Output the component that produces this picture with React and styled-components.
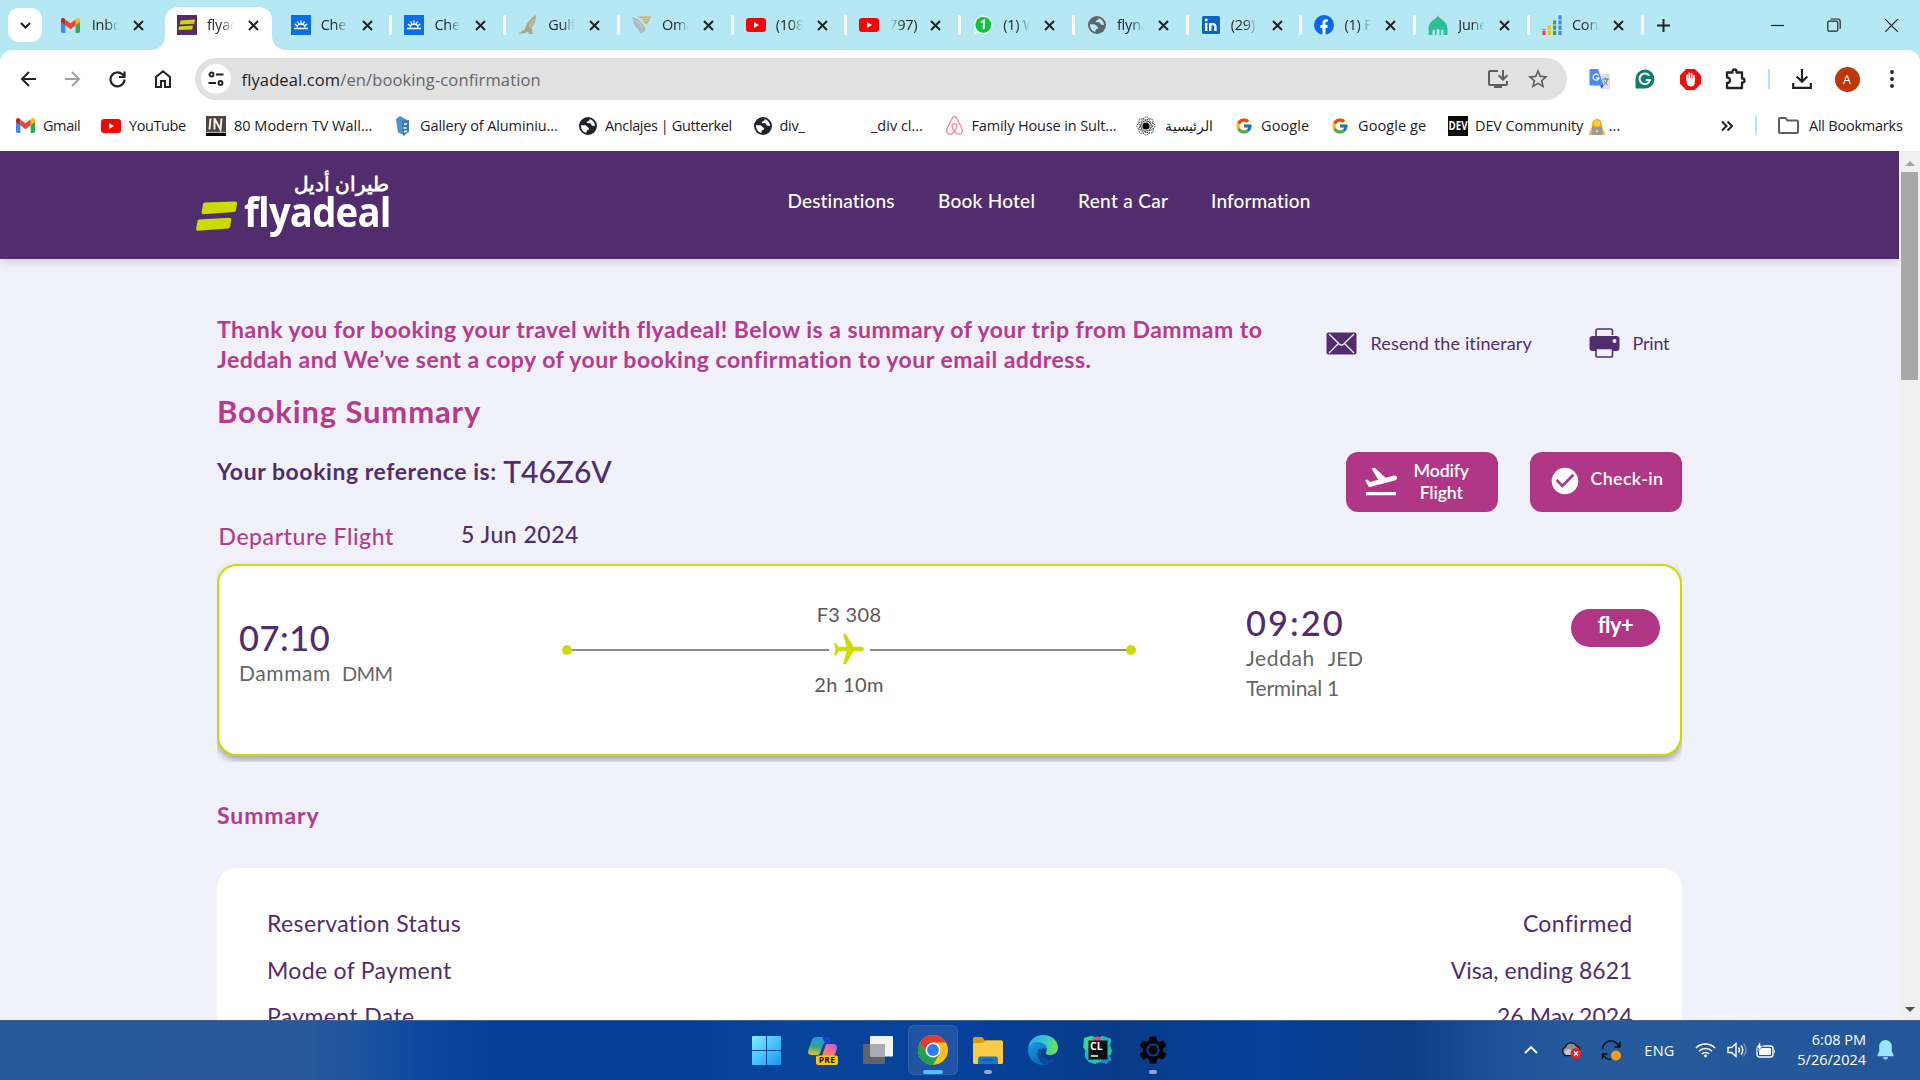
import React from "react";
import styled, { createGlobalStyle, css } from "styled-components";
import { FcGoogle } from "react-icons/fc";
import { FaAirbnb } from "react-icons/fa";
import {
  MdAirplanemodeActive,
  MdCheckCircle,
  MdFlightTakeoff,
  MdInstallDesktop,
  MdStarBorder,
  MdSettings,
} from "react-icons/md";

const ui = `"Open Sans", "Noto Sans", sans-serif`;
const brand = `Lato, "Noto Sans", sans-serif`;
const purple = "#522d6d";
const pink = "#b03786";
const lime = "#cddc00";

const GlobalStyle = createGlobalStyle`
  *, *::before, *::after { box-sizing: border-box; }
  body { margin: 0; background: #fff; overflow: hidden; }
  svg { display: block; flex: none; }
`;

const Screen = styled.div`
  width: 1920px;
  height: 1080px;
  display: flex;
  flex-direction: column;
  overflow: hidden;
  font-family: ${ui};
`;

/* ---------- browser tabs ---------- */

const TabStrip = styled.div`
  height: 50px;
  display: flex;
  flex: none;
  background: #b5e8f2;
`;

const TabSearch = styled.div`
  width: 34px;
  height: 34px;
  margin: 8px 7.7px 0 8px;
  border-radius: 11px;
  background: #fff;
  display: flex;
  align-items: center;
  justify-content: center;
`;

const activeShape = css`
  &::before {
    content: "";
    position: absolute;
    z-index: 0;
    left: 2px;
    right: 5px;
    top: 7px;
    bottom: 0;
    border-radius: 13px 13px 0 0;
    background: #fff;
  }
  &::after {
    content: "";
    position: absolute;
    z-index: 0;
    left: -11px;
    right: -8px;
    bottom: 0;
    height: 13px;
    background: radial-gradient(circle at 0 0, transparent 12.5px, #fff 13px) left / 13px 13px no-repeat,
      radial-gradient(circle at 100% 0, transparent 12.5px, #fff 13px) right / 13px 13px no-repeat;
  }
`;

const TabBox = styled.div`
  position: relative;
  width: 113.75px;
  flex: none;
  padding-left: ${(p) => (p.$first ? 11 : 13.5)}px;
  display: flex;
  align-items: center;
  ${(p) => p.$active && activeShape}
  > * { z-index: 1; }
`;

const TabTitle = styled.span`
  width: 28px;
  margin-left: ${(p) => (p.$first ? 11 : 10)}px;
  margin-right: 13px;
  overflow: hidden;
  white-space: nowrap;
  display: flex;
  justify-content: ${(p) => (p.$fade === "left" ? "flex-end" : "flex-start")};
  font-size: 14.5px;
  line-height: 22px;
  letter-spacing: -0.2px;
  color: #23282c;
  mask-image: linear-gradient(${(p) => (p.$fade === "left" ? "to left" : "to right")}, #000 50%, transparent 96%);
`;

const TabDivider = styled.i`
  width: 3px;
  height: 20px;
  margin-left: auto;
  margin-right: -1.5px;
  border-radius: 1.5px;
  background: ${(p) => (p.$hidden ? "transparent" : "#fff")};
`;

const NewTab = styled.div`
  width: 42px;
  display: flex;
  align-items: center;
  justify-content: center;
`;

const WindowControls = styled.div`
  margin-left: auto;
  margin-right: 0.5px;
  display: flex;
`;

const WindowButton = styled.div`
  width: 57px;
  display: flex;
  align-items: center;
  justify-content: center;
`;

/* ---------- toolbar ---------- */

const BrowserBars = styled.div`
  height: 101px;
  flex: none;
  background: linear-gradient(#b5e8f2 0 20px, #fff 20px);
`;

const BarsSurface = styled.div`
  height: 101px;
  padding-top: 8px;
  border-radius: 12px 12px 0 0;
  background: #fff;
`;

const AddressRow = styled.div`
  height: 42px;
  padding: 0 5.5px 0 5px;
  display: flex;
  align-items: center;
`;

const ToolSlot = styled.div`
  width: ${(p) => p.$w || 45}px;
  flex: none;
  display: flex;
  align-items: center;
  justify-content: center;
`;

const Omnibox = styled.div`
  flex: 1;
  height: 42px;
  margin: 0 11px 0 10px;
  padding: 0 9px 0 6px;
  border-radius: 21px;
  background: #e1e1e1;
  display: flex;
  align-items: center;
`;

const SiteInfo = styled.div`
  width: 30px;
  height: 30px;
  border-radius: 50%;
  background: #fff;
  display: flex;
  align-items: center;
  justify-content: center;
`;

const Url = styled.span`
  margin-left: 10.5px;
  flex: 1;
  font-size: 16.5px;
  letter-spacing: 0.12px;
  color: #62666a;
  b { font-weight: 400; color: #1d2125; }
`;

const OmniAction = styled.div`
  width: 40px;
  display: flex;
  justify-content: center;
  color: #5a5e62;
`;

const Bar = styled.i`
  width: 2px;
  height: ${(p) => p.$h}px;
  background: #b0e6f1;
`;

const Avatar = styled.div`
  width: 25px;
  height: 25px;
  border-radius: 50%;
  background: #bf360c;
  color: #fff;
  font-size: 12.5px;
  display: flex;
  align-items: center;
  justify-content: center;
`;

const BookmarkRow = styled.div`
  height: 51px;
  padding-left: 15px;
  display: flex;
  align-items: center;
`;

const BookmarkItem = styled.div`
  width: ${(p) => p.$w}px;
  flex: none;
  display: flex;
  align-items: center;
  white-space: pre;
`;

const BookmarkIcon = styled.div`
  width: 20px;
  margin-right: ${(p) => p.$gap}px;
  display: flex;
  justify-content: center;
`;

const BookmarkText = styled.span`
  font-size: ${(p) => p.$size || 14.5}px;
  line-height: 22px;
  letter-spacing: ${(p) => p.$ls || 0}px;
  color: #1d2125;
`;

const MoreBookmarks = styled.div`
  margin-left: auto;
  display: flex;
  align-items: center;
`;

const AllBookmarks = styled(BookmarkText)`
  width: 121px;
  padding-left: 10px;
`;

/* ---------- page ---------- */

const Viewport = styled.div`
  height: 869px;
  flex: none;
  display: flex;
  overflow: hidden;
`;

const Page = styled.div`
  width: 1899px;
  background: #f1f1fb;
  font-family: ${brand};
`;

const SiteHeader = styled.header`
  height: 108px;
  padding-left: 196px;
  background: ${purple};
  box-shadow: 0 2px 10px rgba(0, 0, 0, 0.18);
  display: flex;
  align-items: flex-start;
`;

const Logo = styled.div`
  width: 193px;
  height: 80px;
  margin-top: 17px;
  display: flex;
  flex-direction: column;
  align-items: flex-end;
  color: #fff;
`;

const LogoArabic = styled.span`
  height: 19px;
  font: 700 20.3px/30px "Noto Sans", sans-serif;
`;

const LogoLatin = styled.div`
  width: 193px;
  display: flex;
  align-items: flex-start;
  svg { margin: 14px 6.5px 0 0; }
`;

const Wordmark = styled.span`
  font: 700 42px/48px ${ui};
  letter-spacing: -0.9px;
  transform: scaleX(0.912);
  transform-origin: left;
`;

const Nav = styled.nav`
  margin: 39px 0 0 398.5px;
  display: grid;
  grid-template-columns: 150.5px 140px 133px auto;
`;

const NavLink = styled.span`
  font-size: 19px;
  font-weight: 500;
  line-height: 22px;
  letter-spacing: ${(p) => p.$ls}px;
  color: #fff;
`;

const Content = styled.main`
  width: 1682px;
  padding: 54.5px 0 0 217px;
  color: ${purple};
`;

const Intro = styled.section`
  display: flex;
  align-items: flex-start;
`;

const ThankYou = styled.h2`
  width: 1108.5px;
  margin: 0;
  font-size: 23px;
  font-weight: 700;
  line-height: 30px;
  letter-spacing: 0.48px;
  white-space: nowrap;
  color: #b73a8c;
`;

const ActionLink = styled.div`
  height: 36px;
  margin: 11.5px ${(p) => p.$after || 0}px 0 0;
  display: flex;
  align-items: center;
  white-space: nowrap;
  font-size: 18px;
  letter-spacing: ${(p) => p.$ls}px;
  svg { margin-right: ${(p) => p.$gap}px; }
`;

const Title = styled.h1`
  margin: 19.5px 0 23px;
  font-size: 31px;
  font-weight: 700;
  line-height: 36px;
  letter-spacing: 0.85px;
  color: #b73a8c;
`;

const ReferenceRow = styled.section`
  height: 60px;
  display: flex;
  align-items: flex-start;
  justify-content: space-between;
`;

const Reference = styled.div`
  height: 37.5px;
  display: flex;
  align-items: center;
  font-size: 23px;
  font-weight: 700;
  letter-spacing: 0.56px;
`;

const ReferenceCode = styled.span`
  margin-left: 6.5px;
  font-size: 30px;
  font-weight: 500;
  letter-spacing: 0;
`;

const ButtonGroup = styled.div`
  display: flex;
  gap: 32px;
`;

const PinkButton = styled.div`
  width: 152px;
  height: 60px;
  padding-left: ${(p) => p.$pad}px;
  border-radius: 12px;
  background: ${pink};
  color: #fff;
  display: flex;
  align-items: center;
  font-size: 17.8px;
  font-weight: 600;
  line-height: 22px;
  text-align: center;
  letter-spacing: ${(p) => p.$ls}px;
  svg { margin: -3px ${(p) => p.$gap}px 0 0; }
  span { padding-bottom: ${(p) => p.$lift}px; }
`;

const LegHeading = styled.div`
  height: 48px;
  padding-left: 1.5px;
  display: flex;
  align-items: center;
  font-size: 23px;
  font-weight: 500;
`;

const LegLabel = styled.span`
  width: 242.5px;
  letter-spacing: 0.55px;
  color: #b73a8c;
`;

const LegDate = styled.span`
  padding-bottom: 4px;
  letter-spacing: 0.5px;
`;

const FlightCard = styled.section`
  height: 192px;
  margin-top: 4px;
  padding: 0 20px;
  border: 2px solid ${lime};
  border-radius: 20px;
  background: #fff;
  box-shadow: 0 4px 7px rgba(0, 0, 0, 0.32);
  clip-path: inset(-10px 0 -6px 0);
  display: flex;
  align-items: flex-start;
`;

const Stop = styled.div`
  width: ${(p) => p.$w}px;
  padding-top: ${(p) => p.$top}px;
  color: #666;
  font-size: 21px;
  line-height: 30px;
`;

const StopTime = styled.div`
  height: 40px;
  font-size: 34.5px;
  font-weight: 500;
  line-height: 40px;
  letter-spacing: ${(p) => p.$ls}px;
  color: ${purple};
`;

const StopPlace = styled.div`
  display: flex;
  gap: ${(p) => p.$gap || 0}px;
  letter-spacing: ${(p) => p.$ls || 0}px;
`;

const Code = styled.span`
  font-size: 20px;
  letter-spacing: ${(p) => p.$ls || 0}px;
`;

const Route = styled.div`
  width: 574px;
  margin-right: 110px;
  padding-top: 36px;
  display: flex;
  flex-direction: column;
  align-items: center;
  font-size: 20px;
  letter-spacing: 0.3px;
  color: #5f5656;
`;

const RouteLabel = styled.span`
  line-height: ${(p) => p.$lh}px;
`;

const Track = styled.div`
  width: 574px;
  height: 48px;
  display: flex;
  align-items: center;
  color: ${lime};
  svg { margin: -3px 2.5px 0; transform: rotate(90deg); }
`;

const Dot = styled.i`
  width: 10px;
  height: 10px;
  border-radius: 50%;
  background: ${lime};
`;

const Line = styled.i`
  height: 2px;
  flex: 1;
  background: #8a8a8a;
`;

const FarePill = styled.div`
  width: 89px;
  height: 38px;
  margin: 43px 0 0 auto;
  padding-bottom: 8px;
  border-radius: 19px;
  background: ${pink};
  color: #fff;
  display: flex;
  align-items: center;
  justify-content: center;
  font-size: 22px;
  font-weight: 700;
  letter-spacing: -0.6px;
`;

const SectionTitle = styled.h3`
  margin: 43.5px 0 38.5px;
  font-size: 23px;
  font-weight: 700;
  line-height: 30px;
  letter-spacing: 0.9px;
  color: #b73a8c;
`;

const SummaryCard = styled.section`
  padding: 32px 49.5px 40px 50px;
  border-radius: 20px;
  background: #fff;
`;

const SummaryRow = styled.div`
  height: 46.5px;
  display: flex;
  align-items: center;
  justify-content: space-between;
  font-size: 23px;
`;

const Cell = styled.span`
  letter-spacing: ${(p) => p.$ls}px;
`;

const Scrollbar = styled.div`
  width: 21px;
  padding: 10px 1px 8px;
  background: #f0f0f0;
  display: flex;
  flex-direction: column;
  align-items: center;
`;

const Thumb = styled.div`
  width: 17px;
  height: 208px;
  margin: 6px 0 auto;
  background: #a8a8a8;
`;

/* ---------- taskbar ---------- */

const Taskbar = styled.div`
  height: 60px;
  flex: none;
  padding-left: 740.5px;
  border-top: 1px solid #3b6295;
  background: linear-gradient(90deg, #265999 0, #28599a 16%, #1a529f 19%, #0b489e 22%, #043f99 26%, #033c99 34%, #0a459c 41%, #05409b 51%, #073b88 58%, #05409b 66%, #0b3d86 73%, #1c5197 78%, #265a9b 82%, #24579a 100%);
  display: flex;
  color: #fff;
`;

const AppSlot = styled.div`
  width: 55px;
  height: 58px;
  padding-right: ${(p) => p.$pr || 0}px;
  display: flex;
  align-items: center;
  justify-content: center;
`;

const AppTile = styled.div`
  position: relative;
  width: 50px;
  height: 50px;
  border-radius: 6px;
  background: ${(p) => (p.$active ? "rgba(255,255,255,0.1)" : "transparent")};
  box-shadow: ${(p) => (p.$active ? "inset 0 0 0 1px rgba(255,255,255,0.08)" : "none")};
  display: flex;
  align-items: center;
  justify-content: center;
`;

const Running = styled.i`
  position: absolute;
  bottom: 1px;
  width: ${(p) => (p.$active ? 20 : 8)}px;
  height: 4px;
  border-radius: 2px;
  background: ${(p) => (p.$active ? "#4cc2ff" : "#93a6cf")};
`;

const Tray = styled.div`
  margin-left: auto;
  margin-right: 16px;
  display: flex;
`;

const TraySlot = styled.div`
  width: ${(p) => p.$w}px;
  height: 58px;
  display: flex;
  align-items: center;
  justify-content: center;
  font-size: 14.5px;
  letter-spacing: 0.3px;
`;

const Clock = styled.div`
  width: 85px;
  padding-top: 9px;
  font-size: 14.5px;
  line-height: 20px;
  text-align: right;
`;

/* ---------- icons ---------- */

const Stroke = ({ s = 20, w = 2, c = "#202428", vb = 20, children }) => (
  <svg width={s} height={s} viewBox={`0 0 ${vb} ${vb}`} fill="none" stroke={c} strokeWidth={w}>{children}</svg>
);

const CloseIcon = () => <Stroke s={11} vb={11} w={2}><path d="M1 1l9 9M10 1l-9 9" /></Stroke>;

const GmailIcon = () => (
  <svg width="19" height="15" viewBox="0 0 19 15">
    <path d="M0 3v10.5A1.4 1.4 0 0 0 1.4 15h3V6.5z" fill="#4285f4" />
    <path d="M19 3v10.5a1.4 1.4 0 0 1-1.4 1.5h-3V6.5z" fill="#34a853" />
    <path d="M14.6 1.8v5.5L19 4V2.3c0-2-2-2.8-3.4-1.8z" fill="#fbbc04" />
    <path d="M4.4 1.8v5.5L0 4V2.3C0 .3 2-.5 3.4.5z" fill="#c5221f" />
    <path d="M4.4 1.4v5.9l5.1 3.9 5.1-3.9V1.4L9.5 5.3z" fill="#ea4335" />
  </svg>
);

const DealBars = () => (
  <svg width="41" height="31" viewBox="0 0 41 31">
    <path d="M7 3.2q.2-1.6 2-1.7L39 .4q2.2 0 2 2L40 9q-.3 2-2.2 2.1L7.500 13.200q-2 .2-1.900-1.800z" fill={lime} />
    <path d="M1.400 20.200q.2-1.600 2-1.700l30-1.700q2.300 0 2 2l-1.200 6.600q-.3 2-2.200 2.100L2 29.700q-2 .2-1.900-1.800z" fill={lime} />
  </svg>
);

const FlyadealTile = () => (
  <svg width="20" height="20" viewBox="0 0 20 20">
    <rect width="20" height="20" fill="#5b2a6b" />
    <path d="M3.500 5.500L18 4.500l-.8 4.300L2.800 9.500zM2 11.500l14-1-.8 4L1.500 15z" fill={lime} />
  </svg>
);

const CheckTile = () => (
  <svg width="20" height="20" viewBox="0 0 20 20">
    <rect width="20" height="20" fill="#0a6ee8" />
    <g stroke="#fff" fill="none" strokeWidth="1.300">
      <path d="M3 13.500h14M6 12.500a4 3.500 0 0 1 8 0M10 5.500v3M6.500 6.500l1.300 2.500M13.500 6.500L12.200 9M3.800 9l2 1.500M16.200 9l-2 1.500" />
    </g>
  </svg>
);

const FalconIcon = () => (
  <svg width="20" height="20" viewBox="0 0 20 20">
    <path d="M17.500 0c.8 5-1 10-4.500 12.500l1.500 2-.5 1 1 3.500h-4l-1-2.500-3 1.500L0 19l5-3.500 2-1C8 9 12 4 17.500 0z" fill="#b3a57c" />
    <path d="M16 4l-5 7M15.500 8l-4 4" stroke="#d9dccb" strokeWidth=".8" />
  </svg>
);

const OmanIcon = () => (
  <svg width="20" height="20" viewBox="0 0 20 20">
    <path d="M0 2c3 1 6 1 8 4 2 4 7 5 5 10l-5 2.500C8 14 3 13 2 9z" fill="#b4b7bd" />
    <path d="M2 5c4 1.500 7 4 8 8" stroke="#d3dde2" strokeWidth=".7" fill="none" />
    <path d="M5 1.500h14.500l-2 3-1 2.500-2.500 2-2-1.500C11 4 8 3 5 1.500z" fill="#c9ab67" />
    <path d="M9 3.500h9M11.500 5.800h5" stroke="#eddfb5" strokeWidth=".7" />
  </svg>
);

const YouTubeIcon = () => (
  <svg width="20" height="14" viewBox="0 0 20 14">
    <rect width="20" height="14" rx="3" fill="#f00" />
    <path d="M8 4l5 3-5 3z" fill="#fff" />
  </svg>
);

const WhatsAppIcon = () => (
  <svg width="20" height="20" viewBox="0 0 20 20">
    <path d="M10.300.5a9.300 9.300 0 1 1-4.700 17.400L.8 19.500l1.500-4.700A9.300 9.300 0 0 1 10.300.5z" fill="#e7fbe9" />
    <circle cx="10.300" cy="9.800" r="7.900" fill="#11c23c" />
    <path d="M7.800 7.500l3-2V14" stroke="#fff" strokeWidth="2" fill="none" />
  </svg>
);

const GlobeIcon = ({ c = "#202428", land = "#fff" }) => (
  <svg width="18" height="18" viewBox="0 0 18 18">
    <circle cx="9" cy="9" r="9" fill={c} />
    <path d="M2 8.300h4.500l3 2.400c1 .8.500 2-.5 2.300-1.300.3-1.500 1.300-1.700 3A7.200 7.200 0 0 1 2 8.300zM10.500 2c.5 1.500-.3 2-1.600 2.200-1 .2-1 1-1.200 1.800l3.300.300c1.300.2 1.300 2 2.300 2.500 1 .4 2.500 0 2.700.700A7.200 7.200 0 0 0 10.500 2z" fill={land} />
  </svg>
);

const LinkedInIcon = () => (
  <svg width="18" height="18" viewBox="0 0 18 18">
    <rect width="18" height="18" rx="1.500" fill="#0a66c2" />
    <path d="M4.200 7v8M8.200 15V7M8.200 10.500c0-3 5.200-3.400 5.200.2V15" stroke="#fff" strokeWidth="2.400" fill="none" />
    <circle cx="4.200" cy="4" r="1.500" fill="#fff" />
  </svg>
);

const FacebookIcon = () => (
  <svg width="20" height="20" viewBox="0 0 20 20">
    <circle cx="10" cy="10" r="10" fill="#0866ff" />
    <path d="M8.500 20v-7H6.300v-3h2.200V8.300c0-3.400 2-4.600 5.300-4v2.600c-1.700-.2-2.300.1-2.300 1.400V10h2.300l-.5 3h-1.800v7z" fill="#fff" />
  </svg>
);

const DomeIcon = () => (
  <svg width="20" height="20" viewBox="0 0 20 20">
    <path d="M10 0c.5 4 9.500 5.500 9.500 13.500V20h-4v-4c0-2-2.500-2-2.500 0v4h-1.500v-4.500c0-2-3-2-3 0V20H7v-4c0-2-2.500-2-2.500 0v4H.5v-6.500C.5 5.500 9.500 4 10 0z" fill="#2dbf96" />
  </svg>
);

const ChartIcon = () => (
  <svg width="20" height="20" viewBox="0 0 20 20" strokeWidth="3.200" strokeDasharray="4.200 1">
    <path d="M2 20v-6" stroke="#e94335" />
    <path d="M7.300 20V9.500" stroke="#fbbc04" />
    <path d="M12.600 20V4.500" stroke="#34a853" />
    <path d="M18 20V0" stroke="#4285f4" />
  </svg>
);

const InTile = () => (
  <svg width="20" height="20" viewBox="0 0 20 20">
    <rect width="20" height="20" fill="#50423c" />
    <rect y="17" width="20" height="3" fill="#000" />
    <rect y="15.800" width="20" height="1" fill="#cfc8c2" />
    <path d="M4.500 2.500l-1 11M8.500 13.500v-11l6 11 1-11" stroke="#f2efec" strokeWidth="2" fill="none" />
  </svg>
);

const GalleryIcon = () => (
  <svg width="14" height="20" viewBox="0 0 14 20">
    <path d="M0 3l4-3 7 4-2 15.500-7-3z" fill="#4a93cf" />
    <path d="M6 5l7-1v12l-6 4z" fill="#3777b8" />
    <path d="M8 8h3M7.500 12h3M8 16l3-1" stroke="#cfe6f7" strokeWidth="2" />
  </svg>
);

const AtomIcon = () => (
  <svg width="20" height="20" viewBox="0 0 20 20" fill="none" stroke="#444" strokeWidth="1" strokeDasharray="1.500 .8">
    {[0, 45, 90, 135].map((a) => <ellipse key={a} cx="10" cy="10" rx="9" ry="4.800" transform={`rotate(${a} 10 10)`} />)}
    <circle cx="10" cy="10" r="3.600" fill="#000" stroke="none" />
  </svg>
);

const DevTile = () => (
  <svg width="20" height="20" viewBox="0 0 20 20">
    <rect width="20" height="20" fill="#0a0a0a" />
    <text x="10" y="14.200" textAnchor="middle" fill="#fff" fontSize="11.500" fontWeight="700" fontFamily="Open Sans" textLength="19" lengthAdjust="spacingAndGlyphs">DEV</text>
  </svg>
);

const TranslateIcon = () => (
  <svg width="22" height="21" viewBox="0 0 22 21">
    <path d="M8 5h11.500a1.500 1.500 0 0 1 1.500 1.500v12a1.500 1.500 0 0 1-1.500 1.500H13z" fill="#dcdfe3" />
    <path d="M11 16h4l-2.500 4z" fill="#2b5dc0" />
    <path d="M2 0h7l5.500 16.500H2A1.500 1.500 0 0 1 .5 15V1.500A1.500 1.500 0 0 1 2 0z" fill="#4a8af4" />
    <path d="M13.500 10h6.500M16.500 8.500V10M18.500 10c-.5 3-2 4.500-4 6M15 11.500c1 2 2 3 3.500 4" stroke="#5e7480" fill="none" />
    <path d="M9.600 6.500A3 3 0 1 0 10 9H7.200" stroke="#fff" strokeWidth="1.300" fill="none" />
  </svg>
);

const GrammarlyIcon = () => (
  <svg width="20" height="20" viewBox="0 0 20 20">
    <path d="M10 .5a9.500 9.500 0 1 1 0 19H.5V10A9.500 9.500 0 0 1 10 .5z" fill="#0d7f6a" />
    <path d="M14.200 6.700A5.300 5.300 0 1 0 15 11h-4.200" stroke="#fff" strokeWidth="2" fill="none" />
  </svg>
);

const BlockIcon = () => (
  <svg width="21" height="21" viewBox="0 0 21 21">
    <path d="M6.200 0h8.600L21 6.200v8.600L14.800 21H6.200L0 14.800V6.200z" fill="#ef0d0d" />
    <path d="M7 11V6M9.300 10V4M11.700 10V4.500M14 11V6.500" stroke="#fff" strokeWidth="1.700" strokeLinecap="round" />
    <path d="M6.200 9.500h8.600V13c0 3-1.500 4.500-4 4.500-2 0-3.200-1-4-3z" fill="#fff" />
  </svg>
);

const Envelope = () => (
  <svg width="31" height="23" viewBox="0 0 31 23">
    <rect x=".5" y=".5" width="30" height="22" rx="2" fill={purple} />
    <path d="M3 2l10.500 10.300q2 1.800 4 0L28 2M3 21l9.500-9.500M28 21l-9.500-9.500" stroke="#f1f1fb" strokeWidth="1.300" fill="none" />
  </svg>
);

const Printer = () => (
  <svg width="31" height="30" viewBox="0 0 31 30">
    <path d="M7 9V3q0-2 2-2h12.500q2 0 2 2v4" stroke={purple} strokeWidth="1.600" fill="none" />
    <rect x=".5" y="8" width="30" height="15" rx="3" fill={purple} />
    <rect x="7" y="20.500" width="16.500" height="8.500" rx="1" fill="#f1f1fb" stroke={purple} strokeWidth="1.600" />
    <circle cx="25.500" cy="13" r="2" fill="#f1f1fb" />
  </svg>
);

const StartIcon = () => (
  <svg width="29" height="29" viewBox="0 0 29 29">
    <defs><linearGradient id="win" x1="0" y1="0" x2="1" y2="1"><stop offset="0" stopColor="#7df0ff" /><stop offset="1" stopColor="#1497f5" /></linearGradient></defs>
    <path d="M0 1a1 1 0 0 1 1-1h13v14H0zM15 0h13a1 1 0 0 1 1 1v13H15zM0 15h14v14H1a1 1 0 0 1-1-1zM15 15h14v13a1 1 0 0 1-1 1H15z" fill="url(#win)" />
  </svg>
);

const CopilotIcon = () => (
  <svg width="30" height="29" viewBox="0 0 30 29">
    <defs>
      <linearGradient id="cpA" x1="0.300" y1="0" x2="0.100" y2="1"><stop offset="0" stopColor="#1b9ce8" /><stop offset=".5" stopColor="#36a38d" /><stop offset="1" stopColor="#f5c518" /></linearGradient>
      <linearGradient id="cpB" x1="1" y1="0" x2="0.200" y2="1"><stop offset="0" stopColor="#b45cf0" /><stop offset=".5" stopColor="#f06a9c" /><stop offset="1" stopColor="#f98a4d" /></linearGradient>
    </defs>
    <path d="M9 1h9c3 0 3 2 4 6h-6l-4 10c-1 2-2 2-4 2H4c-4 0-4.500-2-3.300-6L4 4c.8-2 2-3 5-3z" fill="url(#cpA)" />
    <path d="M14 1h4c3 0 3 2 4 6h-5z" fill="#1b3fd6" />
    <path d="M18 8h7c3.500 0 4.500 2 3.500 6l-2 6H14z" fill="url(#cpB)" />
    <rect x="8" y="19.500" width="22" height="9.500" rx="2" fill="#ffc408" />
    <text x="19" y="27.300" textAnchor="middle" fontSize="8.500" fontWeight="700" fontFamily="Open Sans" fill="#111" letterSpacing=".3">PRE</text>
  </svg>
);

const TaskViewIcon = () => (
  <svg width="30" height="28" viewBox="0 0 30 28">
    <rect x="0" y="8" width="22" height="20" rx="1" fill="#606468" />
    <rect x="7" y="0" width="23" height="20.500" rx="1" fill="#f2f3f5" />
    <path d="M7 8h15v12.500H8a1 1 0 0 1-1-1z" fill="#a9acb0" />
  </svg>
);

const ChromeIcon = () => (
  <svg width="30" height="30" viewBox="0 0 30 30">
    <circle cx="15" cy="15" r="15" fill="#fbc116" />
    <path d="M2 7.500A15 15 0 0 1 28 7.500H15L8.500 18.750z" fill="#e33b2e" />
    <path d="M2 7.500A15 15 0 0 0 15 30l6.500-11.250H8.500z" fill="#1fa152" />
    <circle cx="15" cy="15" r="7.500" fill="#fff" />
    <circle cx="15" cy="15" r="5.900" fill="#2f7cf0" />
  </svg>
);

const FolderIcon = () => (
  <svg width="30" height="27" viewBox="0 0 30 27">
    <path d="M0 1.500A1.500 1.500 0 0 1 1.500 0H9l3 3.500h16.500A1.500 1.500 0 0 1 30 5v20H0z" fill="#dd9a0b" />
    <path d="M0 6h9.500L13 3.500h15.500A1.500 1.500 0 0 1 30 5v20.500a1.500 1.500 0 0 1-1.500 1.500h-27A1.500 1.500 0 0 1 0 25.500z" fill="#fdcb45" />
    <path d="M5 27v-5a2.500 2.500 0 0 1 2.500-2.500h15A2.500 2.500 0 0 1 25 22v5z" fill="#1479c9" />
    <path d="M9 23h12" stroke="#0a4f8f" strokeWidth="1.200" />
  </svg>
);

const EdgeIcon = () => (
  <svg width="30" height="30" viewBox="0 0 30 30">
    <defs>
      <linearGradient id="edA" x1="0" y1="0.300" x2="1" y2="0.500"><stop offset="0" stopColor="#2aa8e8" /><stop offset=".55" stopColor="#38c8d0" /><stop offset="1" stopColor="#6fe04c" /></linearGradient>
      <linearGradient id="edB" x1="0" y1="0" x2="0.600" y2="1"><stop offset="0" stopColor="#1b9be0" /><stop offset="1" stopColor="#0b5fb8" /></linearGradient>
    </defs>
    <path d="M0 14C1 5 7 0 15 0c9 0 15 6 15 12.500 0 5-4 7.500-8 7.500-3 0-5-1-4-2.500C20 14 17 9.500 11 9.500 6 9.500 1 12 0 14z" fill="url(#edA)" />
    <path d="M0 15c.3-5 5-8 10-8 6 0 9 4 9 7.500-3-3-7-.5-6.500 4C13 24 19 26.500 26.500 24 24 28 20 30 15.500 30 7 30 0 24 0 15z" fill="url(#edB)" />
    <path d="M10 15c-2 7 2 13.500 8 14.700 4-.7 7-3.200 8.700-5.700-5 2.200-11.500 1-13.700-3.500-1-2-1-4 .5-6.500-1.500-.5-3 0-3.500 1z" fill="#0e4a9a" />
  </svg>
);

const CLionIcon = () => (
  <svg width="30" height="30" viewBox="0 0 30 30">
    <path d="M1 3l8-2 6 2 4-2 9 3-1 7 2 5-2 5 1 4-6 3-5-1-5 2-6-2-4-5 1-5-3-5z" fill="#22c9a0" />
    <path d="M20 1l8 3-1 7 2 4-9 1zM2 17l8-1v12l-4-1-4-5z" fill="#19b8c9" />
    <path d="M1 3l7-2 2 6-6 8-3-3 1-4z" fill="#35dd83" />
    <path d="M10 4l5-3 4 4-5 5z" fill="#ee3f8e" />
    <path d="M18 20h9v5l-4 4-5-2z" fill="#0b8fd4" />
    <rect x="5.500" y="5.500" width="19" height="19" fill="#0a1110" />
    <text x="7" y="15" fontSize="10.500" fontWeight="700" fontFamily="Open Sans" fill="#fff">CL</text>
    <path d="M8 21h7" stroke="#fff" strokeWidth="1.500" />
  </svg>
);

const GearIcon = () => (
  <svg width="30" height="30" viewBox="0 0 30 30">
    <MdSettings x="-2" y="-2" size={34} color="#050505" />
    <circle cx="15" cy="15" r="6.600" fill="#0b3f92" />
    <circle cx="15" cy="15" r="4.600" fill="#050505" />
  </svg>
);

const CloudIcon = () => (
  <svg width="21" height="17" viewBox="0 0 21 17">
    <path d="M5 13.500a4.500 4.500 0 0 1-.5-8.500A6 6 0 0 1 15.500 4a4 4 0 0 1 1 7.500L9 13.500z" fill="#8d8d8d" stroke="#151515" strokeWidth="1.300" />
    <path d="M3 10c2-3 5-4 8-2v5H5z" fill="#c9c9c9" />
    <circle cx="15" cy="11.500" r="5.500" fill="#d9252b" />
    <path d="M13 9.500l4 4M17 9.500l-4 4" stroke="#fff" strokeWidth="1.400" />
  </svg>
);

const SyncIcon = () => (
  <svg width="21" height="21" viewBox="0 0 21 21" fill="none" stroke="#0c0c0c" strokeWidth="1.400">
    <path d="M1.500 9A8.500 8.500 0 0 1 18 6.500M19 1.500v5.500h-5.500M1.500 19v-5h5M2 14.500a8.500 8.500 0 0 0 8 5" />
    <circle cx="15" cy="15.500" r="5" fill="#ff9c0a" stroke="none" />
  </svg>
);

const WifiIcon = () => (
  <svg width="21" height="16" viewBox="0 0 21 16" fill="none" stroke="#fff" strokeWidth="1.500">
    <path d="M1 6a13.500 13.500 0 0 1 19 0M4 9.200a9.200 9.200 0 0 1 13 0M6.800 12a5.200 5.200 0 0 1 7.400 0" />
    <circle cx="10.500" cy="14" r="1.400" fill="#fff" stroke="none" />
  </svg>
);

const VolumeIcon = () => (
  <svg width="20" height="18" viewBox="0 0 20 18" fill="none" stroke="#fff" strokeWidth="1.400">
    <path d="M1 6.500h3.500L9 2.500v13L4.500 11.500H1z" />
    <path d="M11.500 6.500q2 2.500 0 5M14 4.300q3.500 4.700 0 9.400" />
    <path d="M16.500 2.500q5 6.500 0 13" opacity=".35" />
  </svg>
);

const BatteryIcon = () => (
  <svg width="20" height="18" viewBox="0 0 20 18">
    <rect x="1" y="5" width="16" height="11" rx="2.500" fill="none" stroke="#fff" strokeWidth="1.400" />
    <rect x="3" y="7" width="12" height="7" rx="1" fill="#fff" />
    <path d="M18 8.500q2 2 0 4z" fill="#fff" />
    <path d="M4.500 0L0 7h2.500L1.500 11 7.300 4.500H4.600z" fill="#fff" stroke="#24579a" strokeWidth=".7" />
  </svg>
);

const BellIcon = () => (
  <svg width="17" height="20" viewBox="0 0 17 20">
    <path d="M8.500 0a6.300 6.300 0 0 1 6.300 6.300v5L16.500 15v1.200H.5V15l1.700-3.700v-5A6.300 6.300 0 0 1 8.500 0zM5.800 17.200h5.400q-.8 2.300-2.700 2.300t-2.700-2.300z" fill="#97e4fb" />
  </svg>
);

/* ---------- data ---------- */

const tabs = [
  { icon: <GmailIcon />, title: "Inbox" },
  { icon: <FlyadealTile />, title: "flyadeal", active: true },
  { icon: <CheckTile />, title: "Che" },
  { icon: <CheckTile />, title: "Che" },
  { icon: <FalconIcon />, title: "Gulf" },
  { icon: <OmanIcon />, title: "Oma" },
  { icon: <YouTubeIcon />, title: "(108" },
  { icon: <YouTubeIcon />, title: "797)", fade: "left" },
  { icon: <WhatsAppIcon />, title: "(1) W" },
  { icon: <GlobeIcon c="#5f6468" land="#b5e8f2" />, title: "flyna" },
  { icon: <LinkedInIcon />, title: "(29)" },
  { icon: <FacebookIcon />, title: "(1) F" },
  { icon: <DomeIcon />, title: "June" },
  { icon: <ChartIcon />, title: "Con" },
];

const bookmarks = [
  { icon: <GmailIcon />, text: "Gmail", w: 86, ls: -0.42 },
  { icon: <YouTubeIcon />, text: "YouTube", w: 105, ls: -0.4 },
  { icon: <InTile />, text: "80 Modern TV Wall...", w: 187 },
  { icon: <GalleryIcon />, text: "Gallery of Aluminiu...", w: 185, gap: 7, ls: -0.11 },
  { icon: <GlobeIcon />, text: "Anclajes | Gutterkel", w: 174.500, gap: 7, ls: -0.37 },
  { icon: <GlobeIcon />, text: "div_", w: 118.500, gap: 7, ls: -0.26 },
  { text: "_div cl...", w: 73.500 },
  { icon: <FaAirbnb size={21} color="#ff7d85" />, text: "Family House in Sult...", w: 191.500, gap: 7, ls: -0.13 },
  { icon: <AtomIcon />, text: "الرئيسية", w: 98, gap: 9, size: 13.8 },
  { icon: <FcGoogle size={18} />, text: "Google", w: 96, gap: 7, ls: 0.1 },
  { icon: <FcGoogle size={18} />, text: "Google ge", w: 118, ls: 0.09 },
  { icon: <DevTile />, text: "DEV Community", w: 141, gap: 7, ls: -0.11 },
];

const nav = [["Destinations", 0.15], ["Book Hotel", 0.25], ["Rent a Car", 0.33], ["Information", 0.14]];

const summary = [
  ["Reservation Status", 0.38, "Confirmed", 0.32],
  ["Mode of Payment", 0.32, "Visa, ending 8621", 0.05],
  ["Payment Date", 0.36, "26 May 2024", 0.02],
];

const apps = [
  { icon: <StartIcon />, pr: 3 },
  { icon: <CopilotIcon /> },
  { icon: <TaskViewIcon /> },
  { icon: <ChromeIcon />, running: true, active: true },
  { icon: <FolderIcon />, running: true },
  { icon: <EdgeIcon /> },
  { icon: <CLionIcon /> },
  { icon: <GearIcon />, running: true },
];

/* ---------- sections ---------- */

const Tabs = () => (
  <TabStrip>
    <TabSearch><Stroke s={11} vb={11} w={2.200}><path d="M1 3l4.500 4.500L10 3" /></Stroke></TabSearch>
    {tabs.map((t, i) => (
      <TabBox key={i} $active={t.active} $first={i === 0}>
        <BookmarkIcon $gap={0}>{t.icon}</BookmarkIcon>
        <TabTitle $fade={t.fade} $first={i === 0}>{t.title}</TabTitle>
        <CloseIcon />
        <TabDivider $hidden={i < 2} />
      </TabBox>
    ))}
    <NewTab><Stroke s={13} vb={13} w={2}><path d="M6.500 0v13M0 6.500h13" /></Stroke></NewTab>
    <WindowControls>
      <WindowButton><Stroke s={13} vb={13} w={1.200}><path d="M0 6.500h13" /></Stroke></WindowButton>
      <WindowButton>
        <Stroke s={14} vb={14} w={1.200}><rect x=".8" y="3.200" width="10" height="10" rx="1.500" /><path d="M3.500 1h7q2.700 0 2.700 2.700v7" /></Stroke>
      </WindowButton>
      <WindowButton><Stroke s={13} vb={13} w={1.200}><path d="M0 0l13 13M13 0L0 13" /></Stroke></WindowButton>
    </WindowControls>
  </TabStrip>
);

const Toolbar = () => (
  <BrowserBars>
    <BarsSurface>
      <AddressRow>
        <ToolSlot><Stroke s={16} vb={16}><path d="M16 8H2M9 1L2 8l7 7" /></Stroke></ToolSlot>
        <ToolSlot><Stroke s={16} vb={16} c="#9fa2a4"><path d="M0 8h14M7 1l7 7-7 7" /></Stroke></ToolSlot>
        <ToolSlot><Stroke s={17} vb={17} w={2.200}><path d="M15.500 8.500a7 7 0 1 1-2.200-5.200l2 2M15.500.5v5.500H10" /></Stroke></ToolSlot>
        <ToolSlot><Stroke s={18} vb={18}><path d="M2 7l7-5.700L16 7v10h-5v-6H7v6H2z" /></Stroke></ToolSlot>
        <Omnibox>
          <SiteInfo>
            <Stroke s={16} vb={16} w={1.900}><circle cx="3.500" cy="3.500" r="2" /><path d="M8 3.500h7.500M0.500 12h7.500" /><circle cx="12.500" cy="12" r="2" /></Stroke>
          </SiteInfo>
          <Url><b>flyadeal.com</b>/en/booking-confirmation</Url>
          <OmniAction><MdInstallDesktop size={24} /></OmniAction>
          <OmniAction><MdStarBorder size={24} /></OmniAction>
        </Omnibox>
        <ToolSlot><TranslateIcon /></ToolSlot>
        <ToolSlot><GrammarlyIcon /></ToolSlot>
        <ToolSlot><BlockIcon /></ToolSlot>
        <ToolSlot>
          <Stroke s={22} vb={22} w={2.300}><path d="M3 4.500h5.500v-1a2 2 0 0 1 4 0v1H18v6h.5a2 2 0 0 1 0 4H18v5.500H3v-5q3 0 3-2.800t-3-2.700z" strokeLinejoin="round" /></Stroke>
        </ToolSlot>
        <ToolSlot $w={22}><Bar $h={20} /></ToolSlot>
        <ToolSlot><Stroke s={20} vb={20} w={2.200}><path d="M10 0v12.500M4.700 7.500L10 12.800l5.300-5.300M1.200 14v4.800h17.600V14" /></Stroke></ToolSlot>
        <ToolSlot><Avatar>A</Avatar></ToolSlot>
        <ToolSlot>
          <svg width="4" height="18" viewBox="0 0 4 18" fill="#202428"><circle cx="2" cy="2" r="1.900" /><circle cx="2" cy="9" r="1.900" /><circle cx="2" cy="16" r="1.900" /></svg>
        </ToolSlot>
      </AddressRow>
      <BookmarkRow>
        {bookmarks.map((b, i) => (
          <BookmarkItem key={i} $w={b.w}>
            {b.icon && <BookmarkIcon $gap={b.gap ?? 8}>{b.icon}</BookmarkIcon>}
            <BookmarkText $ls={b.ls} $size={b.size}>{b.text}</BookmarkText>
          </BookmarkItem>
        ))}
        <svg width="16" height="18" viewBox="0 0 16 18">
          <path d="M3 9q0-7 5-7t5 7l.5 3h-11z" fill="#f3a51f" />
          <circle cx="8" cy="6.500" r="3.200" fill="#ffcf3f" />
          <path d="M0 18q0-5 4-6h8q4 1 4 6z" fill="#f6b73c" />
          <rect x="2.500" y="10" width="11" height="8" rx="1" fill="#9a9a9a" />
          <circle cx="8" cy="14" r="1" fill="#e8e8e8" />
        </svg>
        <BookmarkText $ls={0}>&nbsp;...</BookmarkText>
        <MoreBookmarks>
          <Stroke s={12} vb={12} w={2}><path d="M1 1.500L5.500 6 1 10.500M6.500 1.500L11 6l-4.500 4.500" /></Stroke>
          <ToolSlot $w={45}><Bar $h={19} /></ToolSlot>
          <svg width="21" height="17" viewBox="0 0 21 17" fill="none" stroke="#5a5e62" strokeWidth="2"><path d="M1 2q0-1 1-1h5.500l2 2.500H19q1 0 1 1V15q0 1-1 1H2q-1 0-1-1z" /></svg>
          <AllBookmarks $ls={-0.23}>All Bookmarks</AllBookmarks>
        </MoreBookmarks>
      </BookmarkRow>
    </BarsSurface>
  </BrowserBars>
);

const Booking = () => (
  <Content>
    <Intro>
      <ThankYou>
        Thank you for booking your travel with flyadeal! Below is a summary of your trip from Dammam to
        <br />
        Jeddah and We’ve sent a copy of your booking confirmation to your email address.
      </ThankYou>
      <ActionLink $gap={14} $after={57} $ls={0.14}><Envelope />Resend the itinerary</ActionLink>
      <ActionLink $gap={12.500} $ls={-0.2}><Printer />Print</ActionLink>
    </Intro>
    <Title>Booking Summary</Title>
    <ReferenceRow>
      <Reference>Your booking reference is:<ReferenceCode>T46Z6V</ReferenceCode></Reference>
      <ButtonGroup>
        <PinkButton $pad={16} $gap={13.500} $ls={-0.2} $lift={2}><MdFlightTakeoff size={38} /><span>Modify<br />Flight</span></PinkButton>
        <PinkButton $pad={18.500} $gap={10} $ls={0.4} $lift={8}><MdCheckCircle size={32} /><span>Check-in</span></PinkButton>
      </ButtonGroup>
    </ReferenceRow>
    <LegHeading><LegLabel>Departure Flight</LegLabel><LegDate>5 Jun 2024</LegDate></LegHeading>
    <FlightCard>
      <Stop $w={323} $top={52}>
        <StopTime $ls={0.5}>07:10</StopTime>
        <StopPlace $gap={11} $ls={0.600}>Dammam<Code $ls={-0.7}>DMM</Code></StopPlace>
      </Stop>
      <Route>
        <RouteLabel $lh={24}>F3 308</RouteLabel>
        <Track><Dot /><Line /><MdAirplanemodeActive size={36} /><Line /><Dot /></Track>
        <RouteLabel $lh={20}>2h 10m</RouteLabel>
      </Route>
      <Stop $w={200} $top={37}>
        <StopTime $ls={2}>09:20</StopTime>
        <StopPlace $gap={13} $ls={0.600}>Jeddah<Code>JED</Code></StopPlace>
        <StopPlace $ls={-0.25}>Terminal 1</StopPlace>
      </Stop>
      <FarePill>fly+</FarePill>
    </FlightCard>
    <SectionTitle>Summary</SectionTitle>
    <SummaryCard>
      {summary.map(([k, kl, v, vl]) => (
        <SummaryRow key={k}><Cell $ls={kl}>{k}</Cell><Cell $ls={vl}>{v}</Cell></SummaryRow>
      ))}
    </SummaryCard>
  </Content>
);

export default function App() {
  return (
    <Screen>
      <GlobalStyle />
      <Tabs />
      <Toolbar />
      <Viewport>
        <Page>
          <SiteHeader>
            <Logo>
              <LogoArabic dir="rtl">طيران أديل</LogoArabic>
              <LogoLatin><DealBars /><Wordmark>flyadeal</Wordmark></LogoLatin>
            </Logo>
            <Nav>{nav.map(([t, ls]) => <NavLink key={t} $ls={ls}>{t}</NavLink>)}</Nav>
          </SiteHeader>
          <Booking />
        </Page>
        <Scrollbar>
          <svg width="10" height="5" viewBox="0 0 10 5"><path d="M0 5l5-5 5 5z" fill="#a3a3a3" /></svg>
          <Thumb />
          <svg width="10" height="5" viewBox="0 0 10 5"><path d="M0 0l5 5 5-5z" fill="#4d4d4d" /></svg>
        </Scrollbar>
      </Viewport>
      <Taskbar>
        {apps.map((a, i) => (
          <AppSlot key={i} $pr={a.pr}>
            <AppTile $active={a.active}>{a.icon}{a.running && <Running $active={a.active} />}</AppTile>
          </AppSlot>
        ))}
        <Tray>
          <TraySlot $w={40}><Stroke s={14} vb={14} w={1.900} c="#fff"><path d="M1 10l6-6 6 6" /></Stroke></TraySlot>
          <TraySlot $w={40}><CloudIcon /></TraySlot>
          <TraySlot $w={40}><SyncIcon /></TraySlot>
          <TraySlot $w={57}>ENG</TraySlot>
          <TraySlot $w={34}><WifiIcon /></TraySlot>
          <TraySlot $w={29}><VolumeIcon /></TraySlot>
          <TraySlot $w={30}><BatteryIcon /></TraySlot>
          <Clock>6:08 PM<br />5/26/2024</Clock>
          <TraySlot $w={38}><BellIcon /></TraySlot>
        </Tray>
      </Taskbar>
    </Screen>
  );
}
